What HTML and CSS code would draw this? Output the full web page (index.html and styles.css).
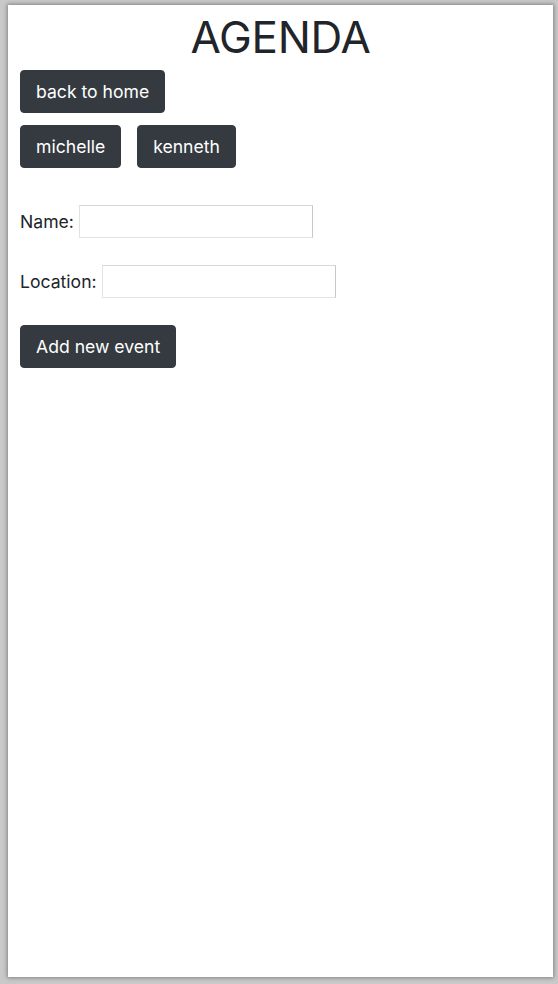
FILE: index.html
```html
<!DOCTYPE html>
<html>
<head>
<meta charset="utf-8">
<link rel="stylesheet" href="styles.css">
</head>
<body>
<div class="window">
  <h1 class="title">AGENDA</h1>
  <div class="row row-home">
    <button class="btn">back to home</button>
  </div>
  <div class="row row-people">
    <button class="btn">michelle</button>
    <button class="btn">kenneth</button>
  </div>
  <form class="form">
    <div class="field">
      <label class="label">Name:</label>
      <input class="input" type="text">
    </div>
    <div class="field">
      <label class="label">Location:</label>
      <input class="input" type="text">
    </div>
    <button class="btn btn-add" type="button">Add new event</button>
  </form>
</div>
</body>
</html>
```
FILE: styles.css
```css
html, body {
  margin: 0;
  padding: 0;
  height: 100%;
}
body {
  background: #c9c9c9;
  padding: 5px 5px 7px 8px;
  box-sizing: border-box;
}
.window {
  background: #fff;
  height: 100%;
  box-sizing: border-box;
  padding: 0 12px;
  box-shadow: 0 0 4px 1px rgba(0,0,0,0.35);
  font-family: Inter, "Liberation Sans", sans-serif;
  color: #212529;
  font-size: 17.6px;
}
.title {
  margin: 0;
  padding-top: 4px;
  text-align: center;
  font-weight: 400;
  font-size: 44px;
  line-height: 56px;
  letter-spacing: -0.3px;
}
.row {
  display: flex;
  gap: 16px;
}
.row-home {
  margin-top: 5px;
}
.row-people {
  margin-top: 12px;
}
.btn {
  font-family: Inter, "Liberation Sans", sans-serif;
  font-size: 17.6px;
  line-height: 26px;
  color: #fff;
  background: #343a40;
  border: 1px solid #343a40;
  border-radius: 4px;
  padding: 7px 15px;
  height: 43px;
  box-sizing: border-box;
}
.form {
  margin-top: 37px;
  display: flex;
  flex-direction: column;
  align-items: flex-start;
}
.field {
  display: flex;
  align-items: center;
  height: 33px;
  margin-bottom: 27px;
}
.label {
  margin-right: 5px;
}
.input {
  width: 234px;
  height: 33px;
  box-sizing: border-box;
  border: 1px solid #e2e2e2;
  border-right-color: #c8c8c8;
  border-top-color: #d8d8d8;
  background: #fff;
  padding: 2px 6px;
  font-size: 16px;
}
```
